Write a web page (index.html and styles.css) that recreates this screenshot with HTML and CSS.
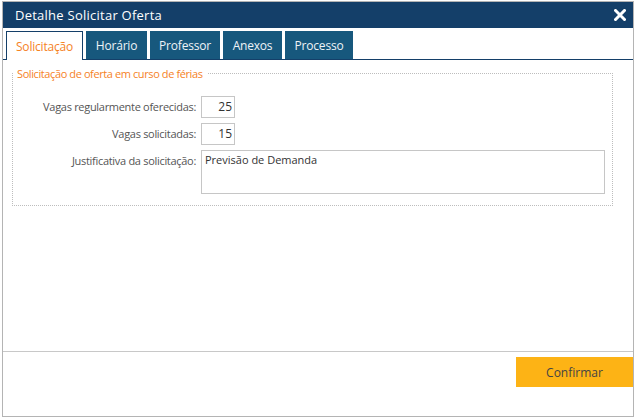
FILE: index.html
```html
<!DOCTYPE html>
<html lang="pt">
<head>
<meta charset="utf-8">
<title>Detalhe Solicitar Oferta</title>
<link rel="stylesheet" href="styles.css">
</head>
<body>
<div class="dialog">
  <div class="titlebar">
    <span class="title">Detalhe Solicitar Oferta</span>
    <svg class="close" width="12" height="12" viewBox="0 0 12 12"><path d="M1.5 1.5 L10.5 10.5 M10.5 1.5 L1.5 10.5" stroke="#fff" stroke-width="3" stroke-linecap="square"/></svg>
  </div>
  <div class="tabs">
    <div class="tab active">Solicitação</div>
    <div class="tab">Horário</div>
    <div class="tab">Professor</div>
    <div class="tab">Anexos</div>
    <div class="tab">Processo</div>
  </div>
  <div class="body">
    <fieldset class="group">
      <legend>Solicitação de oferta em curso de férias</legend>
      <div class="form">
        <label class="lbl">Vagas regularmente oferecidas:</label>
        <div class="input num">25</div>
        <label class="lbl">Vagas solicitadas:</label>
        <div class="input num">15</div>
        <label class="lbl">Justificativa da solicitação:</label>
        <div class="input area">Previsão de Demanda</div>
      </div>
    </fieldset>
  </div>
  <div class="footer">
    <button class="confirm">Confirmar</button>
  </div>
</div>
</body>
</html>
```

FILE: styles.css
```css
html, body {
  margin: 0;
  padding: 0;
  background: #ffffff;
}
body {
  font-family: "Open Sans", "Noto Sans", sans-serif;
  width: 636px;
  height: 420px;
  overflow: hidden;
}
.dialog {
  margin: 1px 0 0 2px;
  width: 630px;
  height: 414px;
  border: 1px solid #b4b4b4;
  display: flex;
  flex-direction: column;
  background: #fff;
}
.titlebar {
  height: 26px;
  background: #143f69;
  display: flex;
  align-items: center;
  justify-content: space-between;
  padding: 0 7px 0 12px;
}
.title {
  color: #fff;
  font-size: 13px;
  letter-spacing: 0.25px;
}
.close {
  display: block;
}
.tabs {
  margin-top: 3px;
  height: 28px;
  display: flex;
  gap: 3px;
  padding-left: 3px;
  border-bottom: 1px solid #143f69;
}
.tab {
  background: #17587d;
  color: #eef3f7;
  font-size: 12px;
  letter-spacing: -0.2px;
  display: flex;
  align-items: center;
  justify-content: center;
  padding: 0;
}
.tab.t1 { width: 77px; }
.tab:nth-child(1) { width: 77px; }
.tab:nth-child(2) { width: 61px; }
.tab:nth-child(3) { width: 70px; }
.tab:nth-child(4) { width: 59px; }
.tab:nth-child(5) { width: 68px; }
.tab.active {
  background: #fff;
  color: #f5821f;
  border: 1px solid #143f69;
  border-bottom: none;
  margin-bottom: -1px;
  box-sizing: border-box;
}
.body {
  flex: 1;
  padding: 6px 20px 0 9px;
}
.group {
  margin: 0;
  border: 1px dotted #bdbdbd;
  padding: 15px 7px 11px 0;
}
.group legend {
  color: #f5821f;
  font-size: 11px;
  letter-spacing: -0.4px;
  padding: 0 4px 0 4px;
  margin-left: 0;
}
.form {
  display: grid;
  grid-template-columns: 183px 1fr;
  column-gap: 5px;
  row-gap: 5px;
  align-items: start;
}
.lbl {
  text-align: right;
  color: #555;
  font-size: 11px;
  letter-spacing: -0.3px;
  line-height: 22px;
}
.input {
  border: 1px solid #c6c6c6;
  box-sizing: border-box;
  color: #333;
  font-size: 11px;
  background: #fff;
}
.input.num {
  width: 34px;
  height: 22px;
  line-height: 20px;
  text-align: right;
  padding-right: 2px;
  font-size: 12px;
}
.input.area {
  height: 44px;
  padding: 0 3px;
  line-height: 18px;
}
.footer {
  border-top: 1px solid #c8c8c8;
  height: 65px;
  display: flex;
  justify-content: flex-end;
  align-items: flex-start;
  padding-top: 5px;
  box-sizing: border-box;
}
.confirm {
  width: 117px;
  height: 30px;
  background: #fdb315;
  border: none;
  color: #444;
  font-family: "Open Sans", "Noto Sans", sans-serif;
  font-size: 12px;
  padding: 0;
}
```
